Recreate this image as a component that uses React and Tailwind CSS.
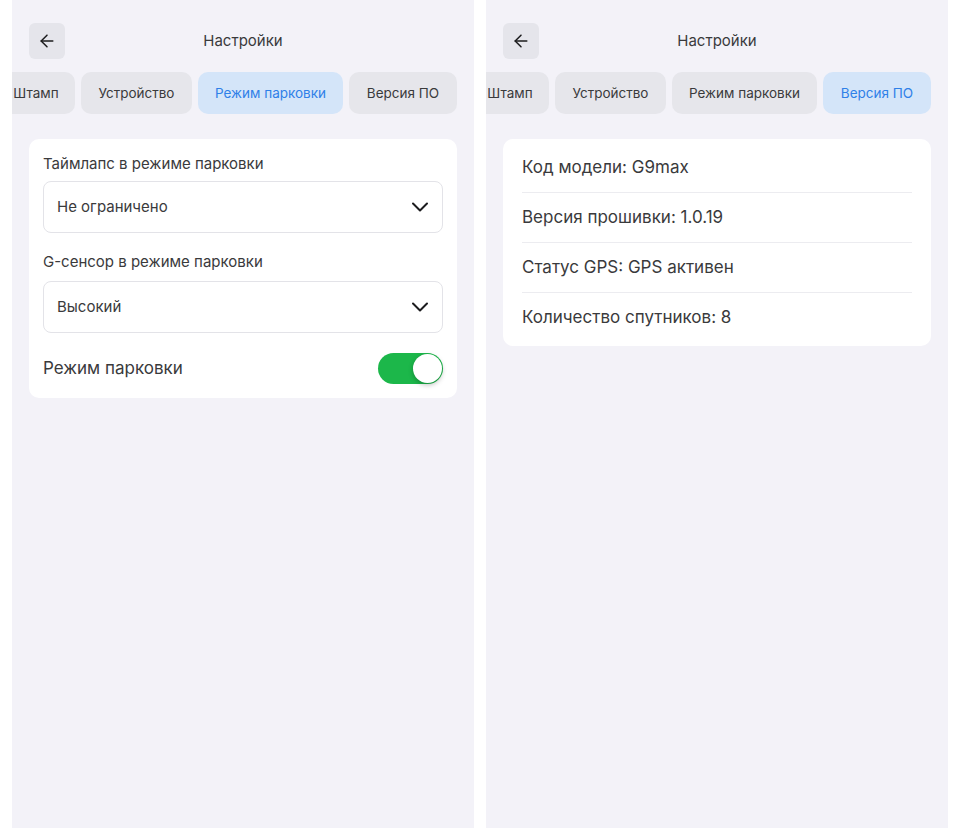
import React from 'react';
import { ArrowLeft } from 'lucide-react';

const tabs = [
  { label: 'Штамп', w: 'w-[78px]' },
  { label: 'Устройство', w: 'w-[111px]' },
  { label: 'Режим парковки', w: 'w-[145px]' },
  { label: 'Версия ПО', w: 'w-[108px]' },
];

const Header = ({ active }) => (
  <>
    <div className="flex items-center h-9">
      <button className="w-9 h-9 rounded-md bg-[#e5e5eb] flex items-center justify-center text-[#1c1c1e]">
        <ArrowLeft size={20} strokeWidth={1.8} />
      </button>
      <div className="flex-1 text-center text-[15px] text-[#3a3a3c]">Настройки</div>
      <div className="w-9" />
    </div>

    {/* Tabs, scrolled so the first one is cut off */}
    <div className="-mx-[17px] mt-[13px] overflow-hidden">
      <div className="flex justify-end gap-1.5 pr-[17px]">
        {tabs.map((t) => (
          <div
            key={t.label}
            className={
              'shrink-0 h-[42px] rounded-[10px] flex items-center justify-center text-[13.5px] whitespace-nowrap ' +
              t.w +
              ' ' +
              (t.label === active ? 'bg-[#d4e5f9] text-[#2f80e8]' : 'bg-[#e6e6eb] text-[#3a3a3c]')
            }
          >
            {t.label}
          </div>
        ))}
      </div>
    </div>
  </>
);

const Chevron = () => (
  <svg width="16" height="10" viewBox="0 0 16 10" fill="none" className="text-[#1c1c1e]">
    <path d="M1 1.5 L8 8.5 L15 1.5" stroke="currentColor" strokeWidth="2" strokeLinecap="round" strokeLinejoin="round" />
  </svg>
);

const Select = ({ value }) => (
  <div className="h-[52px] border border-[#e3e3e8] rounded-lg pl-[13px] pr-[14px] flex items-center justify-between">
    <span className="text-[15px] text-[#3a3a3c]">{value}</span>
    <Chevron />
  </div>
);

const ParkingPanel = () => (
  <div className="w-[462px] bg-[#f3f2f8] px-[17px] pt-[23px]">
    <Header active="Режим парковки" />
    <div className="mt-[25px] bg-white rounded-[10px] px-[14px] pt-[15px] pb-[13px]">
      <div className="text-[15px] leading-5 text-[#3a3a3c]">Таймлапс в режиме парковки</div>
      <div className="mt-[7px]">
        <Select value="Не ограничено" />
      </div>
      <div className="mt-[19px] text-[15px] leading-5 text-[#3a3a3c]">G-сенсор в режиме парковки</div>
      <div className="mt-[9px]">
        <Select value="Высокий" />
      </div>
      <div className="mt-[19px] flex items-center justify-between h-[33px]">
        <span className="text-[17px] text-[#3a3a3c]">Режим парковки</span>
        <div className="w-[65px] h-[31px] rounded-full bg-[#1cb74a] flex items-center justify-end p-[1px]">
          <div className="w-[29px] h-[29px] rounded-full bg-white shadow-[0_2px_5px_rgba(0,0,0,0.25)]" />
        </div>
      </div>
    </div>
  </div>
);

const rows = [
  'Код модели: G9max',
  'Версия прошивки: 1.0.19',
  'Статус GPS: GPS активен',
  'Количество спутников: 8',
];

const FirmwarePanel = () => (
  <div className="w-[462px] bg-[#f3f2f8] px-[17px] pt-[23px]">
    <Header active="Версия ПО" />
    <div className="mt-[25px] bg-white rounded-[10px] px-[19px] pt-[4px] pb-[3px]">
      {rows.map((r, i) => (
        <div
          key={r}
          className={
            'h-[50px] flex items-center text-[17px] text-[#3a3a3c] ' +
            (i < rows.length - 1 ? 'border-b border-[#ececf0]' : '')
          }
        >
          {r}
        </div>
      ))}
    </div>
  </div>
);

export default function App() {
  return (
    <div
      className="min-h-screen h-[828px] bg-white flex gap-3 px-3"
      style={{ fontFamily: 'Inter, "Noto Sans", sans-serif' }}
    >
      <ParkingPanel />
      <FirmwarePanel />
    </div>
  );
}
